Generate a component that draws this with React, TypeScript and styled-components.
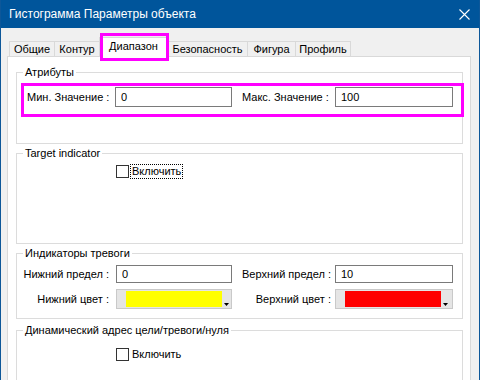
import React from "react";
import styled, { createGlobalStyle } from "styled-components";

const GlobalStyle = createGlobalStyle`
  html, body {
    margin: 0;
    padding: 0;
    background: #ffffff;
  }
  body {
    font-family: "Liberation Sans", Arial, sans-serif;
  }
`;

const Window = styled.div`
  width: 480px;
  height: 380px;
  box-sizing: border-box;
  border-left: 1px solid #0d5799;
  border-right: 1px solid #0d5799;
  background: #f0f0f0;
  display: flex;
  flex-direction: column;
  overflow: hidden;
  font-size: 11px;
  color: #000;
`;

const TitleBar = styled.div`
  height: 28px;
  flex-shrink: 0;
  background: #00559b;
  color: #fff;
  display: flex;
  align-items: center;
  justify-content: space-between;
  padding: 0 10px 0 9px;
  font-size: 12px;
  margin: 0 -1px;
`;

const Body = styled.div`
  flex: 1;
  display: flex;
  flex-direction: column;
  padding: 0 8px 0 6px;
  min-height: 0;
`;

const TabRow = styled.div`
  height: 28px;
  flex-shrink: 0;
  display: flex;
  align-items: flex-end;
  padding-left: 2px;
  position: relative;
  z-index: 1;
`;

const Tab = styled.div<{ $w: number; $active?: boolean }>`
  box-sizing: border-box;
  width: ${(p) => p.$w}px;
  height: ${(p) => (p.$active ? 20 : 15)}px;
  margin-right: -1px;
  margin-bottom: ${(p) => (p.$active ? -1 : 0)}px;
  border: 1px solid #d9d9d9;
  border-bottom: none;
  background: ${(p) => (p.$active ? "#ffffff" : "#f0f0f0")};
  display: flex;
  align-items: center;
  justify-content: center;
  padding-bottom: ${(p) => (p.$active ? 3 : 0)}px;
  position: relative;
  z-index: ${(p) => (p.$active ? 2 : 1)};
  white-space: nowrap;
`;

const Mark = styled.span<{ $t: number; $r: number; $b: number; $l: number }>`
  position: absolute;
  top: ${(p) => p.$t}px;
  right: ${(p) => p.$r}px;
  bottom: ${(p) => p.$b}px;
  left: ${(p) => p.$l}px;
  border: 3px solid #ff00ff;
  pointer-events: none;
`;

const Panel = styled.div`
  flex: 1;
  background: #fff;
  border: 1px solid #d9d9d9;
  border-bottom: none;
  padding: 0 7px 0 8px;
  display: flex;
  flex-direction: column;
  min-height: 0;
`;

const Group = styled.div<{ $top: number; $h: number }>`
  box-sizing: border-box;
  flex-shrink: 0;
  margin-top: ${(p) => p.$top}px;
  height: ${(p) => p.$h}px;
  border: 1px solid #dcdcdc;
  position: relative;
  display: flex;
  flex-direction: column;
`;

const Legend = styled.span`
  position: absolute;
  top: -8px;
  left: 6px;
  line-height: 14px;
  padding: 0 2px;
  background: #fff;
  white-space: nowrap;
`;

const HighlightRow = styled.div`
  box-sizing: border-box;
  height: 34px;
  margin: 10px -2px 0 4px;
  border: 3px solid #ff00ff;
  display: flex;
  align-items: flex-start;
  padding: 1px 0 0 3px;
`;

const FieldLabel = styled.span<{ $w: number }>`
  width: ${(p) => p.$w}px;
  flex-shrink: 0;
  line-height: 20px;
  white-space: nowrap;
`;

const TextBox = styled.input<{ $w: number; $h?: number }>`
  box-sizing: border-box;
  width: ${(p) => p.$w}px;
  height: ${(p) => p.$h ?? 20}px;
  flex-shrink: 0;
  border: 1px solid #7a7a7a;
  padding: 0 5px;
  margin: 0;
  font: inherit;
  color: #000;
  background: #fff;
  outline: none;
`;

const Spacer = styled.span<{ $w: number }>`
  width: ${(p) => p.$w}px;
  flex-shrink: 0;
`;

const CheckRow = styled.div<{ $top: number }>`
  display: flex;
  align-items: center;
  gap: 2px;
  margin: ${(p) => p.$top}px 0 0 99px;
`;

const CheckBox = styled.span`
  box-sizing: border-box;
  width: 13px;
  height: 13px;
  border: 1px solid #333;
  background: #fff;
`;

const CheckLabel = styled.span<{ $focus?: boolean }>`
  line-height: 13px;
  padding: 0 1px;
  outline: ${(p) => (p.$focus ? "1px dotted #000" : "none")};
`;

const AlarmGrid = styled.div`
  display: grid;
  grid-template-columns: 99px 116px 103px 118px;
  grid-template-rows: 18px 20px;
  row-gap: 6px;
  margin-top: 11px;
`;

const GridLabel = styled.span<{ $pr: number }>`
  text-align: right;
  padding-right: ${(p) => p.$pr}px;
  display: flex;
  align-items: center;
  justify-content: flex-end;
  white-space: nowrap;
`;

const Combo = styled.div`
  box-sizing: border-box;
  height: 20px;
  background: #e5e5e5;
  border: 1px solid #c9c9c9;
  display: flex;
  align-items: flex-start;
`;

const Swatch = styled.span<{ $c: string }>`
  width: 96px;
  height: 16px;
  margin: 1px 0 0 9px;
  background: ${(p) => p.$c};
  flex-shrink: 0;
`;

const Arrow = styled.svg`
  margin: 13px 0 0 2px;
  flex-shrink: 0;
`;

function ColorCombo({ color }: { color: string }) {
  return (
    <Combo>
      <Swatch $c={color} />
      <Arrow width="5" height="3" viewBox="0 0 5 3">
        <path d="M0 0h5L2.5 3z" fill="#000" />
      </Arrow>
    </Combo>
  );
}

const tabs = [
  { label: "Общие", w: 46 },
  { label: "Контур", w: 46 },
  { label: "Диапазон", w: 69, active: true },
  { label: "Безопасность", w: 81 },
  { label: "Фигура", w: 49 },
  { label: "Профиль", w: 56 },
];

export default function App() {
  return (
    <>
      <GlobalStyle />
      <Window>
        <TitleBar>
          <span>Гистограмма Параметры объекта</span>
          <svg width="11" height="11" viewBox="0 0 11 11">
            <path d="M0.5 0.5l10 10M10.5 0.5l-10 10" stroke="#fff" strokeWidth="1.1" />
          </svg>
        </TitleBar>
        <Body>
          <TabRow>
            {tabs.map((t) => (
              <Tab key={t.label} $w={t.w} $active={t.active}>
                {t.label}
                {t.active && <Mark $t={-5} $r={-2} $b={-4} $l={0} />}
              </Tab>
            ))}
          </TabRow>
          <Panel>
            <Group $top={15} $h={72}>
              <Legend>Атрибуты</Legend>
              <HighlightRow>
                <FieldLabel $w={88}>Мин. Значение :</FieldLabel>
                <TextBox $w={117} defaultValue="0" readOnly />
                <Spacer $w={10} />
                <FieldLabel $w={93}>Макс. Значение :</FieldLabel>
                <TextBox $w={118} defaultValue="100" readOnly />
              </HighlightRow>
            </Group>

            <Group $top={9} $h={91}>
              <Legend>Target indicator</Legend>
              <CheckRow $top={11}>
                <CheckBox />
                <CheckLabel $focus>Включить</CheckLabel>
              </CheckRow>
            </Group>

            <Group $top={9} $h={66}>
              <Legend>Индикаторы тревоги</Legend>
              <AlarmGrid>
                <GridLabel $pr={7}>Нижний предел :</GridLabel>
                <TextBox $w={116} $h={18} defaultValue="0" readOnly />
                <GridLabel $pr={4}>Верхний предел :</GridLabel>
                <TextBox $w={118} $h={18} defaultValue="10" readOnly />
                <GridLabel $pr={7}>Нижний цвет :</GridLabel>
                <ColorCombo color="#ffff00" />
                <GridLabel $pr={4}>Верхний цвет :</GridLabel>
                <ColorCombo color="#ff0000" />
              </AlarmGrid>
            </Group>

            <Group $top={11} $h={80}>
              <Legend>Динамический адрес цели/тревоги/нуля</Legend>
              <CheckRow $top={17}>
                <CheckBox />
                <CheckLabel>Включить</CheckLabel>
              </CheckRow>
            </Group>
          </Panel>
        </Body>
      </Window>
    </>
  );
}
